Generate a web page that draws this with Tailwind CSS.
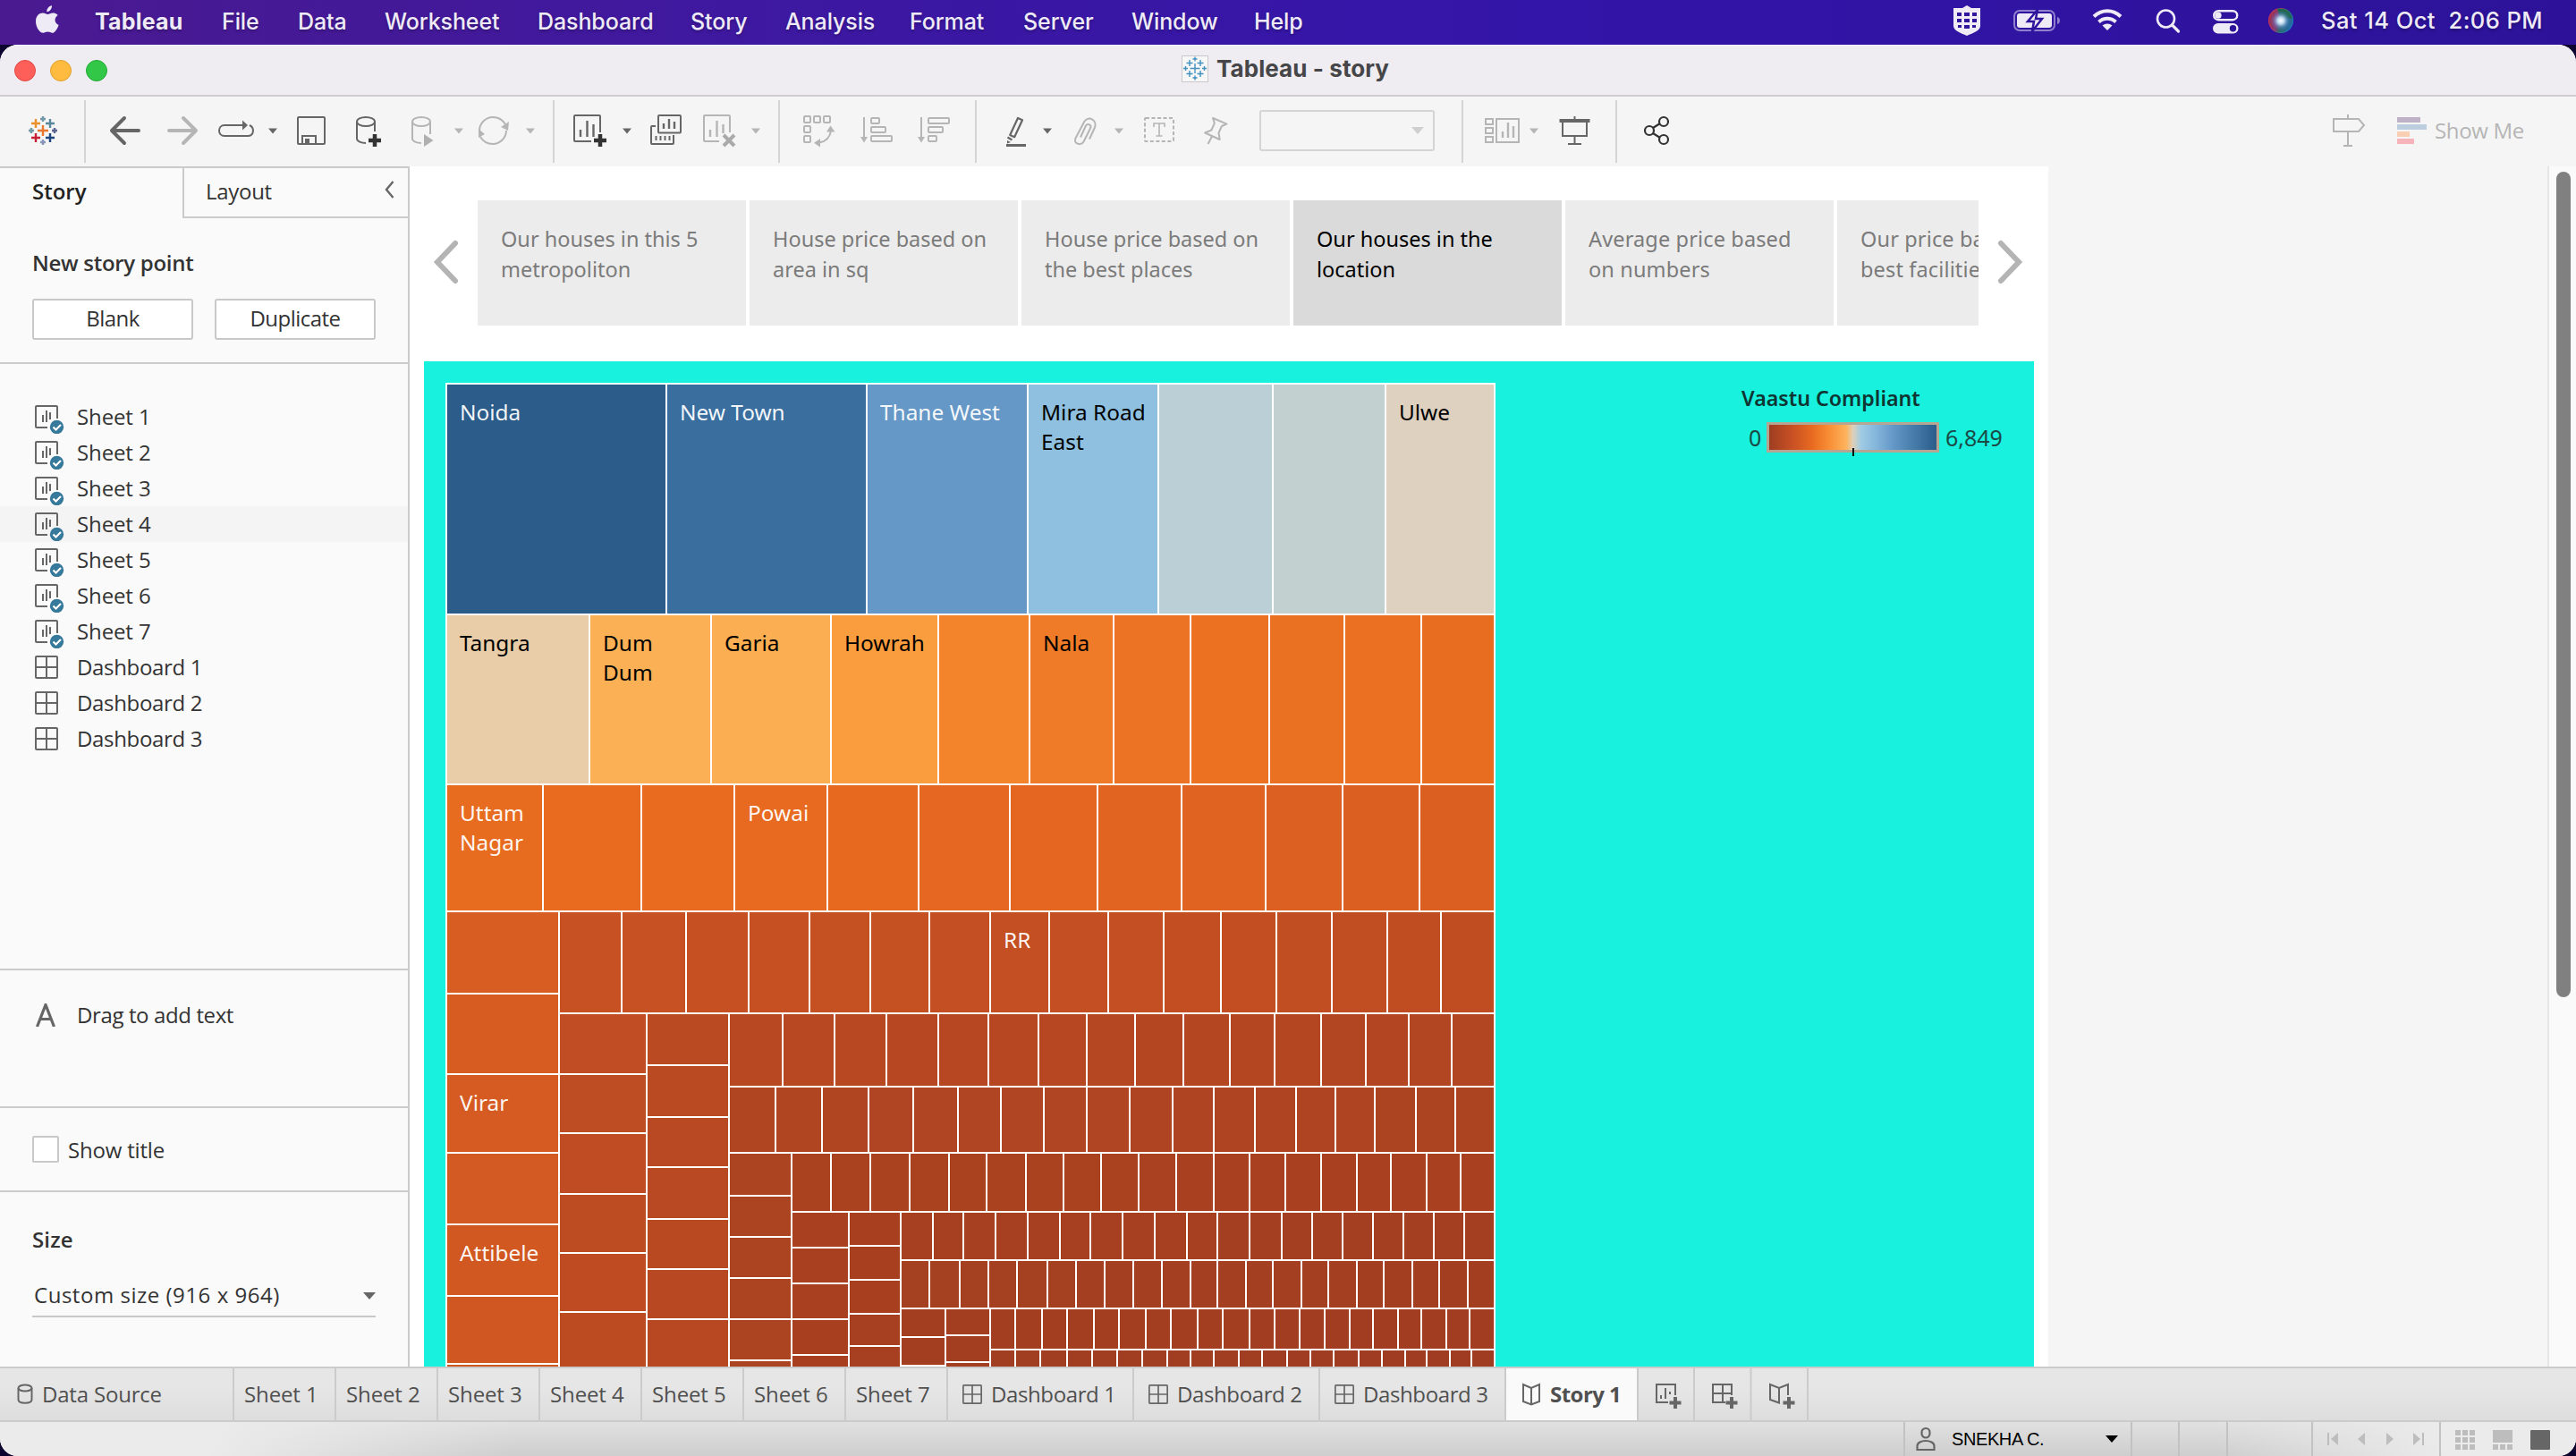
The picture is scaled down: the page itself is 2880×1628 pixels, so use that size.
<!DOCTYPE html>
<html lang="en">
<head>
<meta charset="utf-8">
<title>Tableau - story</title>
<script src="https://cdn.jsdelivr.net/npm/@tailwindcss/browser@4"></script>
</head>
<body class="w-[2880px] h-[1628px] overflow-hidden bg-[#0d0430] font-['Open_Sans',sans-serif] text-[24px] leading-[32px] tracking-[-0.022em] text-[#333]">
<svg class="hidden">
  <symbol id="sheet" viewBox="0 0 34 32">
    <path d="M25 15V2a1 1 0 0 0-1-1H2a1 1 0 0 0-1 1v22a1 1 0 0 0 1 1h12" fill="none" stroke="#666" stroke-width="2"/>
    <path d="M9 19v-8M13 19V6M17 16V8" stroke="#666" stroke-width="2"/>
    <circle cx="24.5" cy="24.5" r="7.7" fill="#36799b"/>
    <path d="M20.5 24.5l3 3 5.500-5.500" fill="none" stroke="#fff" stroke-width="2.200"/>
  </symbol>
  <symbol id="dash" viewBox="0 0 26 26">
    <path d="M2 1h22a1 1 0 0 1 1 1v22a1 1 0 0 1-1 1H2a1 1 0 0 1-1-1V2a1 1 0 0 1 1-1zM13 1v24M1 13h24" fill="none" stroke="#666" stroke-width="2"/>
  </symbol>
</svg>
<div class="flex flex-col w-[2880px] h-[1628px]">

  <!-- macOS menu bar -->
  <div class="shrink-0 h-[50px] flex items-center bg-[linear-gradient(to_right,#4a1a90,#3c18a2_33%,#3315a9_60%,#2d1299)] text-[#eeeaf6] font-['Inter',sans-serif] font-medium text-[25px] leading-[30px] tracking-[-0.004em] [text-shadow:0_2px_3px_rgba(0,0,0,0.25)] whitespace-nowrap pb-[3px]">
    <svg class="ml-[40px] mr-[40px] mt-[-3px] w-[26px] h-[32px]" viewBox="0 0 26 32"><path fill="#eeeaf6" d="M18 0.300c.3 3.500-2.600 7-5.600 7C12 4 14.700.8 18 .3zM24.700 10.900c-4.700 2.900-3.900 9 .9 11-1.300 3.800-4.100 8.800-7 8.900-2 .1-2.600-1.200-5.100-1.200s-3.200 1.200-5.100 1.200C4.200 30.900 0 23.800 0 17.900 0 11.700 4 8.500 7.800 8.500c2.300 0 4.100 1.500 5.600 1.500 1.400 0 3.500-1.600 6.100-1.500 1.200 0 3.600.5 5.200 2.400z"/></svg>
    <span class="w-[142px] font-bold tracking-[0.008em]">Tableau</span>
    <span class="w-[85px]">File</span><span class="w-[97px]">Data</span><span class="w-[171px]">Worksheet</span><span class="w-[171px]">Dashboard</span><span class="w-[106px]">Story</span><span class="w-[139px]">Analysis</span><span class="w-[127px]">Format</span><span class="w-[121px]">Server</span><span class="w-[137px]">Window</span><span class="w-[77px]">Help</span>
    <svg class="ml-[703px] mt-[-1px] w-[664px] h-[44px]" viewBox="2182 2 664 44">
      <path d="M2199 7l5 3h10v20c0 5-8 8-15 11-7-3-15-6-15-11V10h10z" fill="#eeeaf6"/>
      <path d="M2188 15h5v4h-5zM2196 15h6v4h-6zM2205 15h5v4h-5zM2188 22h5v4h-5zM2196 22h6v4h-6zM2205 22h5v4h-5zM2189 29h4v3h-4zM2196 29h6v4h-6zM2205 29h4v3h-4z" fill="#32159d"/>
      <rect x="2252" y="13" width="45" height="22" rx="6" fill="none" stroke="#8f7fcc" stroke-width="2"/>
      <path d="M2300 20c4 1 4 7 0 8z" fill="#8f7fcc"/>
      <rect x="2255" y="16" width="39" height="16" rx="3" fill="#eeeaf6"/>
      <path d="M2278 12l-11 13h7l-2 11 11-14h-7z" fill="#eeeaf6" stroke="#2f149c" stroke-width="2.500"/>
      <path d="M2341 19.500c8.500-8.300 21.500-8.300 30 0M2346.500 25.500c5.500-5 13.500-5 19 0" fill="none" stroke="#eeeaf6" stroke-width="4"/>
      <path d="M2350.500 29.500c3-2.800 8-2.800 11 0L2356 35z" fill="#eeeaf6"/>
      <circle cx="2421.500" cy="22" r="9.500" fill="none" stroke="#eeeaf6" stroke-width="2.600"/><path d="M2428.500 29l7 7" stroke="#eeeaf6" stroke-width="3.200" stroke-linecap="round"/>
      <rect x="2475.200" y="13.200" width="26" height="10" rx="5" fill="none" stroke="#eeeaf6" stroke-width="2.400"/><circle cx="2480" cy="18.200" r="3.600" fill="#eeeaf6"/>
      <rect x="2474" y="27" width="28.500" height="11.500" rx="5.700" fill="#eeeaf6"/><circle cx="2496.500" cy="32.700" r="3.700" fill="#2d1399"/>
      <defs><radialGradient id="siri"><stop offset="0" stop-color="#fff"/><stop offset=".3" stop-color="#b9d6ee"/><stop offset=".65" stop-color="#4a6fb0" stop-opacity=".5"/><stop offset="1" stop-color="#223" stop-opacity=".2"/></radialGradient>
      <linearGradient id="sir2" x1="0" y1=".3" x2="1" y2=".7"><stop offset="0" stop-color="#c8304e"/><stop offset=".4" stop-color="#b03a78"/><stop offset=".6" stop-color="#2a7d78"/><stop offset="1" stop-color="#1c7fd0"/></linearGradient></defs>
      <circle cx="2550" cy="24" r="14" fill="url(#sir2)"/><path d="M2546 11c8-2 15 3 17 11-5-2-10-1-13 2z" fill="#1d7a4c"/><circle cx="2550" cy="24" r="13" fill="url(#siri)"/>
      <text x="2595" y="32.500" fill="#eeeaf6" font-size="25.500" xml:space="preserve" textLength="247.500" style="white-space:pre">Sat 14 Oct  2:06 PM</text>
    </svg>
  </div>

  <!-- Application window -->
  <div class="relative flex-1 min-h-0 flex flex-col bg-[#f5f5f5] rounded-[20px] overflow-hidden">
    <div class="shrink-0 h-[58px] flex items-center bg-[#efedf2] border-b-2 border-[#cfcdd1] border-t border-t-white">
      <div class="flex gap-4 ml-4 w-[1305px]">
        <i class="size-6 rounded-full bg-[#fe5f58] border border-[#e2463f]"></i><i class="size-6 rounded-full bg-[#febb40] border border-[#e0a028]"></i><i class="size-6 rounded-full bg-[#33c748] border border-[#23a937]"></i>
      </div>
      <svg class="w-[32px] h-[32px] ml-[-1px] mt-[-3px]" viewBox="1320 60 32 32"><rect x="1321.500" y="61.500" width="29" height="29" fill="#f7f7f8" stroke="#c9c8cc"/><path d="M1336 70v11M1330.500 75.500h11M1330 66v7M1326.500 69.500h7M1342 66v7M1338.500 69.500h7M1330 78v7M1326.500 81.500h7M1342 78v7M1338.500 81.500h7M1336 62.500v5M1333.500 65h5M1336 83.500v5M1333.500 86h5M1323 75.500h5M1325.500 73v5M1344 75.500h5M1346.500 73v5" stroke="#4190bd" stroke-width="1.400"/></svg>
      <span class="ml-[8px] mt-[-3px] font-['Inter',sans-serif] font-bold text-[26px] tracking-[0.003em] text-[#464548]">Tableau - story</span>
    </div>

    <!-- Toolbar -->
    <div class="shrink-0 h-[78px] flex bg-[#f5f5f5] py-1 fill-none">
      <div class="w-[96px] h-[70px] border-r-2 border-[#d4d4d4]"><svg class="w-[94px] h-[70px]" viewBox="0 112 94 70" stroke-width="2.400"><path d="M48 140v12M42 146h12" stroke="#e8762c" /><path d="M40 133v10M35 138h10" stroke="#eb912b"/><path d="M56 133v10M51 138h10" stroke="#59879b"/><path d="M40 149v10M35 154h10" stroke="#c72035"/><path d="M56 149v10M51 154h10" stroke="#1f457e"/><path d="M48 130v6M45 133h6M35 143v6M32 146h6" stroke="#7099a6"/><path d="M61 143v6M58 146h6" stroke="#5b6591"/><path d="M48 156v6M45 159h6" stroke="#8a94b8"/></svg></div>
      <div class="w-[524px] h-[70px] border-r-2 border-[#d4d4d4]"><svg class="w-[522px] h-[70px]" viewBox="96 112 522 70" stroke-width="2">
        <path d="M155 146h-29M139 132l-14 14 14 14" stroke="#666" stroke-width="4" stroke-linecap="round" stroke-linejoin="round"/>
        <path d="M189 146h29M205 132l14 14-14 14" stroke="#b5b5b5" stroke-width="4" stroke-linecap="round" stroke-linejoin="round"/>
        <path d="M271 140h-20c-8 0-8 12 0 12h26c7 0 8-9 2-12" stroke="#666"/><path d="M271 134.500l6 5.500-6 5.500z" fill="#666"/>
        <path d="M300 143.500h10l-5 6z" fill="#666"/>
        <rect x="333" y="131" width="30" height="30" rx="1" stroke="#666"/><path d="M338 160v-8h15v8" stroke="#666"/><path d="M341 155h5v6h-5z" fill="#666"/>
        <g stroke="#666"><ellipse cx="409" cy="136" rx="10" ry="5"/><path d="M399 136v19c0 3 5 5 10 5M419 136v11"/></g><path d="M419 150v14M412 157h14" stroke="#333" stroke-width="4.500"/>
        <g stroke="#b5b5b5"><ellipse cx="471" cy="136" rx="10" ry="5"/><path d="M461 136v19c0 3 5 5 10 5M481 136v14"/></g><path d="M474 150l10.500 7-10.500 7z" fill="#b0b0b0"/>
        <path d="M508 143.500h10l-5 6z" fill="#b5b5b5"/>
        <path d="M536 146c0-8 7-15 15-15 6 0 11 3 14 8M566 146c0 8-7 15-15 15-6 0-11-3-14-8" stroke="#b5b5b5"/><path d="M560 142l9-6-1 10zM542 150l-7-6v10z" fill="#b5b5b5"/>
        <path d="M588 143.500h10l-5 6z" fill="#b5b5b5"/>
      </svg></div>
      <div class="w-[252px] h-[70px] border-r-2 border-[#d4d4d4]"><svg class="w-[250px] h-[70px]" viewBox="620 112 250 70" stroke-width="2">
        <path d="M671 148v-18a1 1 0 0 0-1-1h-27a1 1 0 0 0-1 1v27a1 1 0 0 0 1 1h18" stroke="#666"/><path d="M649 153v-8M656.500 153v-18M663.500 153v-14" stroke="#666" stroke-width="2.400"/><path d="M671 150v14M664 157h14" stroke="#333" stroke-width="4.500"/>
        <path d="M696 143.500h10l-5 6z" fill="#666"/>
        <g stroke="#666"><rect x="736" y="129" width="25" height="19.500" rx="1"/><path d="M742 144v-6M748 144v-11M754 144v-8" stroke-width="2.400"/><path d="M733 141h-4a1 1 0 0 0-1 1v18a1 1 0 0 0 1 1h23a1 1 0 0 0 1-1v-9M733.500 157v-5M738.500 157v-5M743.500 157v-5M748.500 157v-5" /></g>
        <g stroke="#b5b5b5"><path d="M816 148v-18a1 1 0 0 0-1-1h-27a1 1 0 0 0-1 1v27a1 1 0 0 0 1 1h16"/><path d="M794 153v-8M801.500 153v-18M808.500 149v-10" stroke-width="2.400"/></g><path d="M809 151l12 12M821 151l-12 12" stroke="#aaa" stroke-width="4"/>
        <path d="M840 143.500h10l-5 6z" fill="#b5b5b5"/>
      </svg></div>
      <div class="w-[220px] h-[70px] border-r-2 border-[#d4d4d4]"><svg class="w-[218px] h-[70px]" viewBox="872 112 218 70" stroke-width="2" stroke="#b5b5b5">
        <rect x="899" y="130" width="7" height="7" rx="1"/><rect x="910" y="130" width="7" height="7" rx="1"/><rect x="921" y="130" width="7" height="7" rx="1"/><rect x="899" y="141" width="7" height="7" rx="1"/><rect x="899" y="152" width="7" height="7" rx="1"/><path d="M929 146c-1 8-5 12-13 13.500"/><path d="M924 147.500h9.500l-5-7zM917 155v9.500l-7-4.700z" fill="#b5b5b5" stroke="none"/>
        <path d="M966 131v24M1030 131v24"/><path d="M962 153h8l-4 6.500zM1026 153h8l-4 6.500z" fill="#b5b5b5" stroke="none"/>
        <rect x="974" y="132" width="9" height="6" rx="1"/><rect x="974" y="142" width="16" height="6" rx="1"/><rect x="974" y="152" width="23" height="6" rx="1"/>
        <rect x="1038" y="132" width="23" height="6" rx="1"/><rect x="1038" y="142" width="16" height="6" rx="1"/><rect x="1038" y="152" width="9" height="6" rx="1"/>
      </svg></div>
      <div class="w-[544px] h-[70px] border-r-2 border-[#d4d4d4] flex items-center"><svg class="w-[316px] h-[70px]" viewBox="1092 112 316 70" stroke-width="2" stroke="#b5b5b5">
        <g stroke="#666"><path d="M1138 132l5 2.200-8.800 19-5-2.200z" stroke-width="2.200" stroke-linejoin="round"/><path d="M1126.500 153.500l5 3" stroke-width="2.200"/><path d="M1126 157l4 2-4 1.500z" fill="#666" stroke="none"/><path d="M1125 162.500h22" stroke-width="3"/></g>
        <path d="M1166 143.500h10l-5 6z" fill="#666" stroke="none"/>
        <path d="M1218 155.500l6-13c3-7-6-14-11.500-7l-10 19c-3 6 6 9 9 4l7.500-15c2-4-3-6-5-3l-6 13"/>
        <path d="M1246 143.500h10l-5 6z" fill="#b5b5b5" stroke="none"/>
        <rect x="1280" y="132" width="32" height="26" rx="1" stroke-dasharray="4 2.500"/><path d="M1290 142v-4h12v4M1296 138v14M1292.500 152h7" stroke-width="1.600"/>
        <path d="M1356 132l15.500 6.700-5.500 2.300-3.500 7.500 1.200 7.500-16.500-7.500 7.200-3 3.500-7.800zM1355 152.500l-4.500 8.500" stroke-linejoin="round"/>
      </svg>
      <div class="w-[196px] h-[46px] mt-[-3px] border-2 border-[#d4d4d4] rounded-[3px] flex items-center justify-end pr-[10px]"><svg class="w-[14px] h-[8px]" viewBox="0 0 14 8"><path d="M0 0h14L7 8z" fill="#cfcfcf"/></svg></div></div>
      <div class="w-[172px] h-[70px] border-r-2 border-[#d4d4d4]"><svg class="w-[170px] h-[70px]" viewBox="1636 112 170 70" stroke-width="2" stroke="#b5b5b5">
        <rect x="1661" y="133" width="8" height="6"/><rect x="1661" y="143" width="8" height="6"/><rect x="1661" y="153" width="8" height="6"/><rect x="1673" y="133" width="25" height="26"/><path d="M1680 154v-7M1686 154v-17M1692 154v-13" stroke-width="2.400"/>
        <path d="M1710 143.500h10l-5 6z" fill="#b5b5b5" stroke="none"/>
        <g stroke="#666"><path d="M1743.500 135h34" stroke-width="4"/><path d="M1760.500 130v4M1747 136v16h27v-16M1760.500 152v9M1753 161h15"/></g>
      </svg></div>
      <svg class="w-[60px] h-[70px]" viewBox="1808 112 60 70" stroke="#333" stroke-width="2.200"><circle cx="1844" cy="146" r="5"/><circle cx="1860" cy="136" r="5"/><circle cx="1860" cy="156" r="5"/><path d="M1848 143l8-5M1848 149l8 5"/></svg>
      <svg class="ml-[734px] w-[118px] h-[70px]" viewBox="2602 112 118 70" stroke="#b5b5b5" stroke-width="2"><path d="M2609 133h28l6 7-6 7h-28zM2625 128v5M2625 147v16M2620 163h10"/><g stroke="none"><path d="M2680 131h26v6h-26z" fill="#bfb2c6"/><path d="M2680 139h33v6h-33z" fill="#bccde0"/><path d="M2680 147h14v6h-14z" fill="#f8ceb5"/><path d="M2680 155h19v6h-19z" fill="#f7b3ba"/></g></svg>
      <span class="ml-[2px] mt-[18px] tracking-[-0.014em] text-[#b5b5b5]">Show Me</span>
    </div>

    <!-- Side panel, canvas, scroll bar -->
    <div class="flex-1 min-h-0 flex">
      <div class="w-[458px] shrink-0 flex flex-col bg-[#fafafa] border-t-2 border-r-2 border-[#cbcbcb]">
        <div class="flex h-[56px]">
          <div class="w-[204px] pl-[36px] pt-[10px] font-semibold tracking-[0em] text-[#222]">Story</div>
          <div class="flex-1 flex justify-between border-l-2 border-b-2 border-[#cbcbcb] pl-[24px] pt-[10px] pr-[15px]"><span class="tracking-[-0.012em]">Layout</span><svg class="w-[11px] h-[20px] mt-[4px]" viewBox="0 0 11 20"><path d="M9.500 1l-7.500 9 7.500 9" fill="none" stroke="#666" stroke-width="2.400"/></svg></div>
        </div>
        <div class="h-[163px] pl-[36px] pt-[34px] border-b-2 border-[#cbcbcb]">
          <div class="font-semibold tracking-[-0.012em]">New story point</div>
          <div class="flex gap-[24px] mt-[24px]"><div class="w-[180px] h-[46px] rounded-[3px] border-2 border-[#c8c8c8] bg-white text-center leading-[40px]">Blank</div><div class="w-[180px] h-[46px] rounded-[3px] border-2 border-[#c8c8c8] bg-white text-center leading-[40px]">Duplicate</div></div>
        </div>
        <div id="sources" class="h-[678px] pt-[39px] border-b-2 border-[#cbcbcb]"></div>
        <div class="h-[154px] pl-[40px] pt-[34px] flex gap-[24px] border-b-2 border-[#cbcbcb]"><svg class="w-[22px] h-[26px] mt-[3px]" viewBox="0 0 22 26"><path d="M1.500 26L11 1.500 20.500 26M5 17.500h12" fill="none" stroke="#666" stroke-width="3.200"/></svg><span class="tracking-[-0.016em]">Drag to add text</span></div>
        <div class="h-[94px] pl-[36px] flex items-center gap-[10px] border-b-2 border-[#cbcbcb]"><i class="size-[30px] bg-white border-2 border-[#c8c8c8] rounded-[2px]"></i><span class="mt-[1px] tracking-[-0.008em]">Show title</span></div>
        <div class="pl-[36px] pt-[37px]">
          <div class="font-semibold tracking-[0.005em]">Size</div>
          <div class="mt-[29px] w-[384px] h-[42px] border-b-2 border-[#c8c8c8] flex justify-between pl-[2px]"><span class="mt-[1px] tracking-[0.022em]">Custom size (916 x 964)</span><svg class="w-[14px] h-[8px] mt-[14px]" viewBox="0 0 14 8"><path d="M0 0h14L7 8z" fill="#666"/></svg></div>
        </div>
      </div>

      <div class="w-[1832px] shrink-0 bg-white flex flex-col">
        <div class="h-[218px] shrink-0 flex pt-[38px] font-['Noto_Sans',sans-serif] text-[23.500px] leading-[34px] tracking-normal text-[#7b7b7b]">
          <svg class="ml-[25px] mr-[19px] mt-[44px] w-[32px] h-[50px]" viewBox="0 0 32 50"><path d="M26 4L6 25l20 21" fill="none" stroke="#b4b4b4" stroke-width="6" stroke-linecap="round"/></svg>
          <div class="w-[1678px] h-[140px] flex gap-1 overflow-hidden whitespace-nowrap">
            <div class="shrink-0 w-[300px] pl-[26px] pt-[26px] bg-[#ececec]">Our houses in this 5<br>metropoliton</div>
            <div class="shrink-0 w-[300px] pl-[26px] pt-[26px] bg-[#ececec]">House price based on<br>area in sq</div>
            <div class="shrink-0 w-[300px] pl-[26px] pt-[26px] bg-[#ececec]">House price based on<br>the best places</div>
            <div class="shrink-0 w-[300px] pl-[26px] pt-[26px] bg-[#dadada] text-black">Our houses in the<br>location</div>
            <div class="shrink-0 w-[300px] pl-[26px] pt-[26px] bg-[#ececec] tracking-[0.006em]">Average price based<br>on numbers</div>
            <div class="shrink-0 w-[300px] pl-[26px] pt-[26px] bg-[#ececec] tracking-[0.006em]">Our price based on<br>best facilities</div>
          </div>
          <svg class="ml-[17px] mt-[44px] w-[36px] h-[50px]" viewBox="0 0 36 50"><path d="M8 4l20 21L8 46" fill="none" stroke="#b4b4b4" stroke-width="6" stroke-linecap="round"/></svg>
        </div>
        <div class="flex-1 min-h-0 ml-[16px] w-[1800px] bg-[#17f1dd] flex items-start font-['Noto_Sans',sans-serif]">
          <div class="ml-[24px] mt-[24px] w-[1174px] h-[1100px] shrink-0 overflow-hidden bg-white p-0.5">
            <div id="treemap" class="w-[1170px] h-[1098px] flex flex-col gap-0.5 text-[24.400px] leading-[33px] tracking-normal"></div>
          </div>
          <div class="ml-[274px] mt-[25px] tracking-normal">
            <div class="ml-[1px] text-[23.200px] font-semibold text-[#0f3532]">Vaastu Compliant</div>
            <div class="flex items-start mt-[11px] ml-[9px] text-[25px] text-[#1b4a46]">
              <span class="w-[20px] mt-[1px]">0</span>
              <div class="relative w-[193px] h-[34px] border-[3px] border-[#b5a693] bg-[linear-gradient(to_right,#9e3d22,#c95124_14%,#e96b20_26%,#f98f36_36%,#fdb35c_46%,#decfb8_50%,#9fcbe4_55%,#86b8dc_63%,#6598c8_74%,#4a7fad_85%,#2b5c8a)]"><i class="absolute left-[93px] top-[26px] w-[2px] h-[9px] bg-black"></i></div>
              <span class="ml-[7px] mt-[1px]">6,849</span>
            </div>
          </div>
        </div>
      </div>

      <div class="flex-1"></div>
      <div class="w-[32px] bg-[#fafafa] border-l-2 border-[#e6e6e6] pl-2 pt-[6px]"><div class="w-4 h-[923px] rounded-full bg-[#808080]"></div></div>
    </div>

    <!-- Sheet tabs -->
    <div class="shrink-0 h-[60px] flex border-t-2 border-[#cbcbcb] bg-[linear-gradient(#e6e6e6,#e6e6e6_35%,#dddddd)] text-[#505050]">
      <div class="w-[262px] flex items-center border-r-2 border-[#cbcbcb] pl-[19px] tracking-[-0.008em]"><svg class="w-[18px] h-[24px] mr-[10px]" viewBox="0 0 18 24"><g fill="none" stroke="#666" stroke-width="2"><ellipse cx="9" cy="5" rx="7.500" ry="3.500"/><path d="M1.500 5v13c0 5 15 5 15 0V5"/></g></svg>Data Source</div>
      <div id="tabs" class="flex"></div>
      <div class="w-[148px] flex items-center gap-[9px] pl-[16px] bg-[#fafafa] border-r-2 border-[#cbcbcb] font-bold"><svg class="w-[24px] h-[26px]" viewBox="0 0 24 26"><path d="M12 6L3 2v19l9 3.500L21 21V2zM12 6v18" fill="none" stroke="#666" stroke-width="2"/></svg>Story 1</div>
      <svg class="w-[190px] h-[58px]" viewBox="1832 1530 190 58" fill="none" stroke="#666" stroke-width="2">
        <path d="M1873 1560v-12h-21v20h13M1857 1564v-4M1862 1564v-12M1867 1559v-3"/><path d="M1873 1562v13M1866.500 1568.500h13" stroke-width="4"/>
        <path d="M1936 1560v-12h-21v20h14M1926 1548v20M1915 1558h21"/><path d="M1936 1562v13M1929.500 1568.500h13" stroke-width="4"/>
        <path d="M1999 1560v-12l-10 4-10-4v17l10 3.500v-16.500"/><path d="M2000 1562v13M1993.500 1568.500h13" stroke-width="4"/>
        <path d="M1894 1530v58M1957.500 1530v58M2021 1530v58" stroke="#cbcbcb"/>
      </svg>
    </div>

    <!-- Status bar -->
    <div class="shrink-0 h-[40px] flex border-t-2 border-[#cbcbcb] bg-[linear-gradient(to_right,#ebebeb_8%,rgba(235,235,235,0)_20%,rgba(235,235,235,0)_86%,#ebebeb_95%),linear-gradient(#e1e1e1,#cecece)] text-black font-['Liberation_Sans',sans-serif] text-[20px] tracking-[-0.03em]">
      <div class="w-[2128px]"></div>
      <div class="w-[256px] flex items-center border-x-2 border-[#c2c2c2] pl-[12px]"><svg class="w-[22px] h-[28px]" viewBox="0 0 22 28"><g fill="none" stroke="#666" stroke-width="2.200"><rect x="6.500" y="2" width="9" height="10.500" rx="4.500"/><path d="M1.500 26v-4c0-8 19-8 19 0v4z"/></g></svg><span class="ml-[18px] w-[172px] tracking-[-0.02em]">SNEKHA C.</span><svg class="w-[14px] h-[8px]" viewBox="0 0 14 8"><path d="M0 0h14L7 8z"/></svg></div>
      <div class="w-[53px] border-r-2 border-[#c2c2c2]"></div><div class="w-[54px] border-r-2 border-[#c2c2c2]"></div><div class="w-[95px] border-r-2 border-[#c2c2c2]"></div>
      <svg class="w-[294px] h-[38px]" viewBox="2586 1590 294 38" fill="#bdbdbd"><path d="M2602 1602h2v14h-2zM2614 1602v14l-8-7zM2644 1602v14l-8-7zM2668 1602v14l8-7zM2698 1602v14l8-7zM2708 1602h2v14h-2z"/><path d="M2727 1590h2v38h-2z" fill="#c2c2c2"/>
      <path d="M2745 1599h6v6h-6zM2753 1599h6v6h-6zM2761 1599h6v6h-6zM2745 1607h6v6h-6zM2753 1607h6v6h-6zM2761 1607h6v6h-6zM2745 1615h6v6h-6zM2753 1615h6v6h-6zM2761 1615h6v6h-6zM2787 1599h22v14h-22zM2787 1615h6v6h-6zM2795 1615h6v6h-6zM2803 1615h6v6h-6z"/><rect x="2829" y="1599" width="22" height="22" rx="1" fill="#666"/></svg>
    </div>
  </div>
</div>
<script>
// Story point sources and workbook tabs
const sources = document.getElementById('sources'), tabs = document.getElementById('tabs');
for (let i = 1; i <= 10; i++) {
  const dash = i > 7, name = dash ? 'Dashboard ' + (i - 7) : 'Sheet ' + i;
  sources.insertAdjacentHTML('beforeend',
    `<div class="h-[40px] flex items-center pl-[39px] ${i === 4 ? 'bg-[#f4f4f4]' : ''}">
      ${dash ? '<svg class="w-[26px] h-[26px] mr-[21px]"><use href="#dash"/></svg>' : '<svg class="w-[34px] h-[32px] mt-[6px] mr-[13px]"><use href="#sheet"/></svg>'}
      <span class="mt-[-1px] ${dash ? 'tracking-[-0.014em]' : 'tracking-[-0.005em]'}">${name}</span></div>`);
  tabs.insertAdjacentHTML('beforeend', dash
    ? `<div class="w-[208px] flex items-center border-r-2 border-[#cbcbcb] pl-[16px]"><svg class="w-[22px] h-[22px] mr-[10px]"><use href="#dash"/></svg><span class="tracking-[-0.016em]">${name}</span></div>`
    : `<div class="w-[114px] flex items-center pl-[11px] border-r-2 border-[#cbcbcb] tracking-[-0.005em]">${name}</div>`);
}

// Treemap: each strip takes a slice of the remaining area.
// r = row across the top, c = column down the left; cuts = dividing lines inside the strip.
const strips = [
  ['r', 686, [744,968,1148,1294,1422,1548], ['#2b5c8a','#396e9f','#6598c6','#8fc0df','#bacfd6','#c2d1d0','#ded1bf'], {0:'Noida',1:'New Town',2:'Thane West',3:'Mira Road<br>East',6:'Ulwe'}, 3],
  ['r', 876, [658,794,928,1048,1150,1244,1330,1418,1502,1588], ['#e8cda8','#fbb055','#fbae52','#fa9d3e','#f3842c','#ef7b28','#ec7323','#ec7222','#eb7122','#eb7021','#e96d20'], {0:'Tangra',1:'Dum<br>Dum',2:'Garia',3:'Howrah',5:'Nala'}, 0],
  ['r', 1018, [606,716,820,924,1026,1128,1226,1320,1414,1500,1586], ['#e86c20','#e96b20','#e96b20','#e76a20','#e76920','#e56721','#e46621','#e26421','#e06321','#dc6021','#db5f21','#db5f21'], {0:'Uttam<br>Nagar',3:'Powai'}],
  ['c', 624, [1110,1200,1288,1368,1448,1524], ['#d85d22','#ce5621'], {2:'Virar',4:'Attibele'}],
  ['r', 1132, [694,766,836,904,972,1038,1106,1172,1238,1300,1364,1426,1488,1550,1610], ['#c75122','#c04d22'], {7:'RR'}],
  ['c', 722, [1200,1266,1334,1400,1466], ['#c04d23','#bd4b21'], {}],
  ['c', 814, [1190,1248,1304,1362,1418,1474], ['#ba4a22','#b74821'], {}],
  ['r', 1214, [874,932,990,1048,1104,1160,1214,1268,1322,1374,1424,1476,1526,1574,1622], ['#b84822','#b24522'], {}],
  ['r', 1288, [866,918,970,1020,1070,1118,1166,1214,1262,1310,1356,1402,1448,1492,1536,1582,1626], ['#b04522','#ad4421'], {}],
  ['c', 884, [1336,1382,1428,1474,1520], ['#ad4421','#ac4321'], {}],
  ['r', 1354, [928,972,1016,1060,1102,1146,1188,1230,1272,1314,1356,1396,1436,1476,1516,1554,1594,1632], ['#aa4220','#a94121'], {}],
  ['c', 948, [1394,1434,1474,1514], ['#a94020','#a84020'], {}],
  ['c', 1006, [1392,1430,1468,1504], ['#a84020','#a74020'], {}],
  ['r', 1408, [1042,1076,1112,1148,1184,1218,1254,1290,1326,1360,1396,1432,1466,1500,1534,1568,1602,1636], ['#a74021','#a43f21'], {}],
  ['r', 1462, [1038,1072,1104,1136,1170,1202,1234,1266,1298,1330,1360,1392,1422,1454,1484,1516,1546,1578,1608,1640], ['#a54021','#a33e21'], {}],
  ['c', 1056, [1494,1526], ['#a33e21','#a33e21'], {}],
  ['c', 1106, [1492,1522], ['#a33e21','#a33e21'], {}],
  ['r', 1508, [1134,1164,1192,1222,1250,1280,1308,1338,1366,1396,1424,1452,1480,1508,1534,1562,1588,1616,1642], ['#a33e21','#a23d21'], {}],
  ['r', 1560, [1134,1162,1192,1220,1248,1276,1304,1330,1356,1384,1410,1438,1464,1490,1518,1544,1570,1594,1620,1644], ['#a13d21','#a03c21'], {}],
];
const mix = (a, b, t) => '#' + [1, 3, 5].map(i => Math.round(parseInt(a.substr(i, 2), 16) * (1 - t) + parseInt(b.substr(i, 2), 16) * t).toString(16).padStart(2, '0')).join('');
let box = document.getElementById('treemap'), left = 500, top0 = 430;
const right = 1670, bottom = 1560;
strips.forEach(([kind, end, cuts, colors, labels, darkFrom], s) => {
  const row = kind === 'r', start = row ? left : top0, n = cuts.length + 1;
  const strip = document.createElement('div');
  strip.className = row ? 'shrink-0 flex gap-0.5' : 'shrink-0 flex flex-col gap-0.5';
  strip.style[row ? 'height' : 'width'] = end - (row ? top0 : left) + 'px';
  for (let i = 0; i < n; i++) {
    const a = i ? cuts[i - 1] + 2 : start, b = i < n - 1 ? cuts[i] : (row ? right : bottom);
    const cell = document.createElement('div');
    cell.className = (darkFrom !== undefined && i >= darkFrom ? 'text-black' : 'text-white/95') + ' shrink-0 pl-[14px] pt-[14px] whitespace-nowrap overflow-hidden';
    if (!labels[i]) cell.className = 'shrink-0';
    cell.style[row ? 'width' : 'height'] = b - a + 'px';
    cell.style.background = colors.length > 2 ? colors[i] : mix(colors[0], colors[1], i / (n - 1));
    cell.innerHTML = labels[i] || '';
    strip.append(cell);
  }
  box.append(strip);
  if (row) top0 = end + 2; else left = end + 2;
  if (s < strips.length - 1) {
    const next = strips[s + 1][0] === 'r';
    const rest = document.createElement('div');
    rest.className = next ? 'flex-1 min-w-0 min-h-0 flex flex-col gap-0.5' : 'flex-1 min-w-0 min-h-0 flex gap-0.5';
    box.append(rest);
    box = rest;
  }
});
</script>
</body>
</html>
